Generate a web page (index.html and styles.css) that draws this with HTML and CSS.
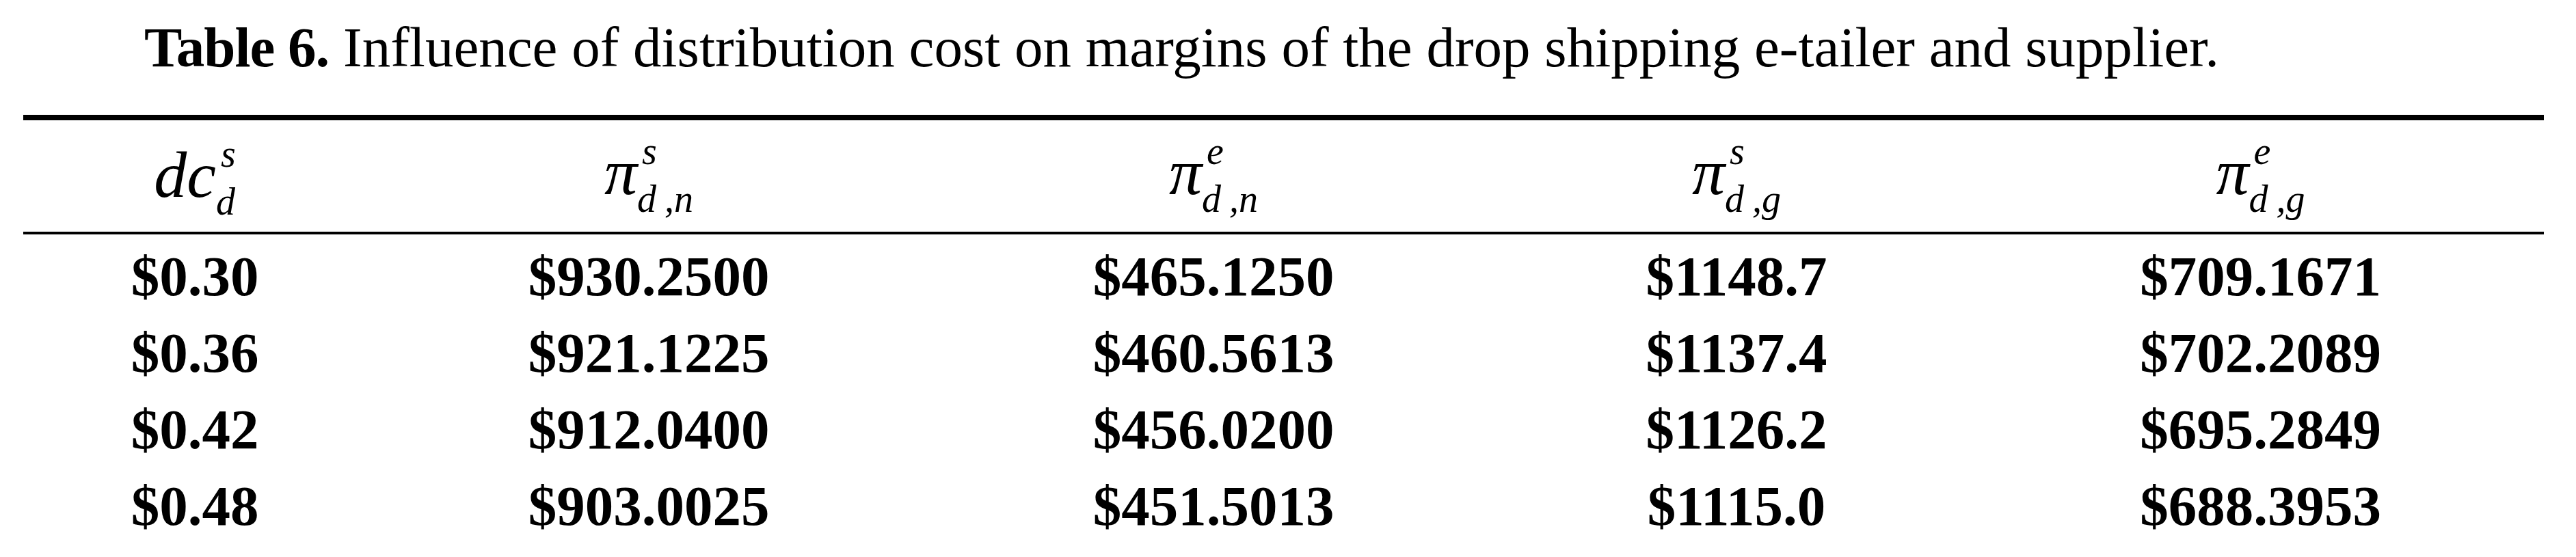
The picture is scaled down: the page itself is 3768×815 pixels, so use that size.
FILE: index.html
```html
<!DOCTYPE html>
<html lang="en">
<head>
<meta charset="utf-8">
<title>Table 6</title>
<link rel="stylesheet" href="styles.css">
</head>
<body>
<div class="page">
  <p class="caption"><b>Table 6.</b> Influence of distribution cost on margins of the drop shipping e-tailer and supplier.</p>
  <div class="table">
    <div class="row head">
      <div class="cell cell-first">
        <span class="math"><span class="base">dc</span><span class="scripts"><span class="sup">s</span><span class="sub">d</span></span></span>
      </div>
      <div class="cell">
        <span class="math"><span class="base">π</span><span class="scripts"><span class="sup">s</span><span class="sub">d<span class="cm">,</span>n</span></span></span>
      </div>
      <div class="cell">
        <span class="math"><span class="base">π</span><span class="scripts"><span class="sup">e</span><span class="sub">d<span class="cm">,</span>n</span></span></span>
      </div>
      <div class="cell">
        <span class="math"><span class="base">π</span><span class="scripts"><span class="sup">s</span><span class="sub">d<span class="cm">,</span>g</span></span></span>
      </div>
      <div class="cell">
        <span class="math"><span class="base">π</span><span class="scripts"><span class="sup">e</span><span class="sub">d<span class="cm">,</span>g</span></span></span>
      </div>
    </div>
    <div class="body">
      <div class="row data">
        <div class="cell">$0.30</div>
        <div class="cell">$930.2500</div>
        <div class="cell">$465.1250</div>
        <div class="cell">$1148.7</div>
        <div class="cell">$709.1671</div>
      </div>
      <div class="row data">
        <div class="cell">$0.36</div>
        <div class="cell">$921.1225</div>
        <div class="cell">$460.5613</div>
        <div class="cell">$1137.4</div>
        <div class="cell">$702.2089</div>
      </div>
      <div class="row data">
        <div class="cell">$0.42</div>
        <div class="cell">$912.0400</div>
        <div class="cell">$456.0200</div>
        <div class="cell">$1126.2</div>
        <div class="cell">$695.2849</div>
      </div>
      <div class="row data">
        <div class="cell">$0.48</div>
        <div class="cell">$903.0025</div>
        <div class="cell">$451.5013</div>
        <div class="cell">$1115.0</div>
        <div class="cell">$688.3953</div>
      </div>
    </div>
  </div>
</div>
</body>
</html>
```

FILE: styles.css
```css
html, body {
  margin: 0;
  padding: 0;
  background: #ffffff;
  color: #000000;
}

.page {
  width: 3768px;
}

.caption {
  margin: 0;
  padding: 19px 0 0 211px;
  font-family: "Liberation Serif", "Times New Roman", serif;
  font-size: 83px;
  line-height: 100px;
  white-space: nowrap;
}

.caption b {
  font-weight: 700;
  letter-spacing: -1px;
}

.table {
  margin: 49px 0 0 34px;
  width: 3687px;
  border-top: 8px solid #000000;
}

.row {
  display: grid;
  grid-template-columns: 502px 826px 826px 704px 829px;
}

.head {
  height: 163px;
  border-bottom: 4px solid #000000;
}

.head .cell {
  display: flex;
  justify-content: center;
  align-items: flex-start;
  padding-top: 28px;
}

.head .cell-first {
  padding-top: 32px;
}

.math {
  display: flex;
  align-items: flex-start;
  font-family: "Liberation Serif", "Times New Roman", serif;
  font-style: italic;
  font-weight: 400;
}

.base {
  font-size: 96px;
  line-height: 96px;
}

.scripts {
  display: flex;
  flex-direction: column;
  font-size: 56px;
  line-height: 70px;
  margin-top: -18px;
}

.sup {
  padding-left: 7px;
}

.cm {
  margin-left: 12px;
}

.body {
  padding-top: 5px;
}

.data .cell {
  text-align: center;
  font-family: "Liberation Serif", "Times New Roman", serif;
  font-weight: 700;
  font-size: 83px;
  line-height: 112px;
  white-space: nowrap;
}
```
